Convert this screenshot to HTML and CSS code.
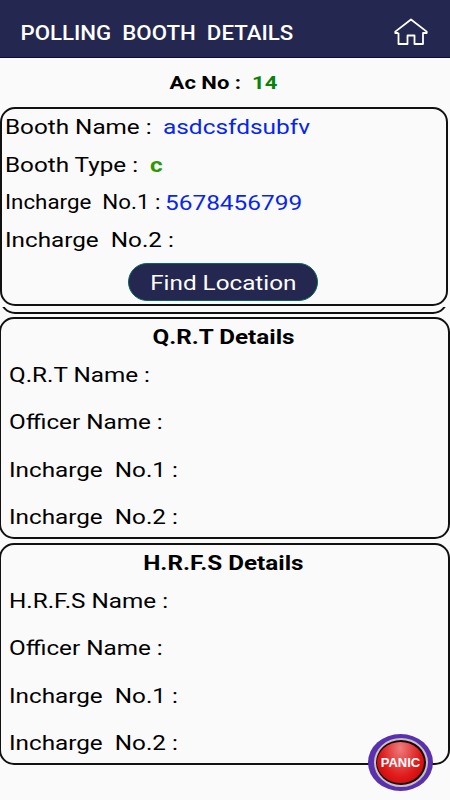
FILE: index.html
```html
<!DOCTYPE html>
<html lang="en">
<head>
<meta charset="utf-8">
<title>Polling Booth Details</title>
<link rel="stylesheet" href="styles.css">
</head>
<body>
<header class="bar">
  <h1 class="t title">POLLING&nbsp; BOOTH&nbsp; DETAILS</h1>
  <svg class="home" viewBox="0 0 34 28" fill="none" stroke="#fff" stroke-width="1.8" stroke-linejoin="round"><path d="M4.5 15H1.3V13.6L17 1.5L32.7 13.6V15H29V26H20.5V17.5H13.5V26H4.5V15"/></svg>
</header>
<main>
  <div class="ac"><span class="t">Ac No :&nbsp; <span class="green">14</span></span></div>
  <section class="card booth">
    <p class="row"><span class="t name">Booth Name :</span><span class="t value">asdcsfdsubfv</span></p>
    <p class="row"><span class="t type">Booth Type :</span><span class="t c">c</span></p>
    <p class="row"><span class="t small">Incharge&nbsp; No.1 :</span><span class="t value">5678456799</span></p>
    <p class="row"><span class="t">Incharge&nbsp; No.2 :</span></p>
    <button class="find"><span class="t">Find Location</span></button>
  </section>
  <div class="sliver"><div class="sliver-card"></div></div>
  <section class="card team">
    <h2><span class="t">Q.R.T Details</span></h2>
    <p class="row"><span class="t">Q.R.T Name :</span></p>
    <p class="row"><span class="t">Officer Name :</span></p>
    <p class="row"><span class="t">Incharge&nbsp; No.1 :</span></p>
    <p class="row"><span class="t">Incharge&nbsp; No.2 :</span></p>
  </section>
  <section class="card team">
    <h2><span class="t">H.R.F.S Details</span></h2>
    <p class="row"><span class="t">H.R.F.S Name :</span></p>
    <p class="row"><span class="t">Officer Name :</span></p>
    <p class="row"><span class="t">Incharge&nbsp; No.1 :</span></p>
    <p class="row"><span class="t">Incharge&nbsp; No.2 :</span></p>
  </section>
</main>
<button class="panic"><span class="ring"><span class="dome"><span class="label">PANIC</span></span></span></button>
</body>
</html>
```

FILE: styles.css
```css
* { box-sizing: border-box; margin: 0; padding: 0; }
body { width: 450px; height: 800px; overflow: hidden; position: relative; background: #fafafa; color: #000; font-family: Roboto, sans-serif; font-size: 21px; }
.t { display: inline-block; white-space: nowrap; transform: scaleX(1.155); transform-origin: left center; }
.bar { height: 58px; background: #24274f; border-bottom: 1px solid #0b0c38; display: flex; align-items: center; justify-content: space-between; padding: 8px 22px 0 20px; }
.title { font-size: 20px; font-weight: 500; color: #fff; transform: translateX(.5px) scaleX(1.112); }
.home { width: 34px; height: 28px; margin-bottom: 2px; }
.ac { height: 49px; text-align: center; font-size: 19px; font-weight: 700; line-height: 50px; padding-right: 3px; }
.ac .t { transform-origin: center; transform: scaleX(1.16); }
.green { color: #0a830a; }
.card { border: 2px solid #111; }
.booth { width: 448px; height: 198.5px; border-radius: 15px; padding-left: 3px; }
.row { display: flex; }
.booth .row { height: 37.8px; line-height: 36px; }
.value { color: #0624f4; transform: scaleX(1.162); }
.name { width: 157.5px; }
.type { width: 144.5px; }
.small { width: 160px; font-size: 19.5px; transform: scaleX(1.145); }
.c { color: #2c9900; font-weight: 700; }
.find { display: flex; align-items: center; justify-content: center; width: 190px; height: 38px; margin: 3px 0 0 123px; border: 1.5px solid #07685a; border-radius: 19px; background: #24274f; color: #fff; font: inherit; }
.find .t { transform-origin: center; position: relative; top: 1px; }
.sliver { height: 7px; margin: 1.5px 0 3px; overflow: hidden; display: flex; align-items: flex-end; }
.sliver-card { flex: none; width: 448px; height: 60px; border: 2px solid #111; border-radius: 15px; }
.team { width: 451px; height: 222px; margin: 0 0 4px -1px; border-radius: 15px; padding-left: 7.5px; }
.team h2 { text-align: center; font-size: 21px; line-height: 36px; height: 33px; padding-right: 9px; }
.team h2 .t { transform-origin: center; }
.team .row { height: 47.4px; line-height: 47.4px; }
.panic { position: absolute; left: 368px; top: 734px; width: 65px; height: 57px; border: 0; border-radius: 50%; background: #5930ad; display: flex; align-items: center; justify-content: center; }
.ring { width: 54px; height: 49px; border-radius: 50%; background: #1c0808; border: 2px solid #c9bec6; display: flex; align-items: center; justify-content: center; }
.dome { width: 47px; height: 41px; border-radius: 50%; background: radial-gradient(ellipse at 50% 15%, #ee7c7c 0, #e34242 35%, #e01818 60%, #b90000 100%); display: flex; align-items: center; justify-content: center; }
.label { font: 700 13px "Liberation Sans", sans-serif; color: #fff; }
```
